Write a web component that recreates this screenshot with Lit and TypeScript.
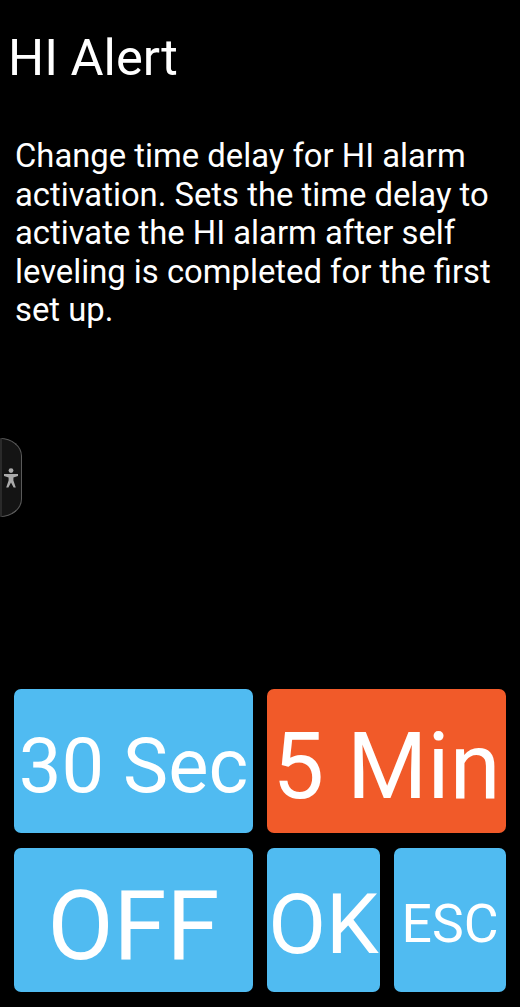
import { LitElement, html, css } from "lit";
import { customElement } from "lit/decorators.js";

@customElement("app-root")
export class AppRoot extends LitElement {
  static styles = css`
    :host { display: block; width: 520px; height: 1007px; background: #000; color: #fff; font-family: Roboto, sans-serif; overflow: hidden; position: relative; }
    .page { height: 1007px; display: flex; flex-direction: column; box-sizing: border-box; }
    h1 { margin: 0; padding: 30px 0 0 8px; font-size: 50.7px; font-weight: 400; line-height: 56px; }
    p { margin: 0; padding: 51px 15px 0 15px; font-size: 32.8px; line-height: 38.5px; flex: 1; }
    .grid { display: grid; grid-template-columns: 239px 113px 112px; grid-template-rows: 144px 144px; gap: 15px 14px; padding: 0 14px 15px 14px; }
    .btn { background: #50bbf1; border-radius: 7px; display: flex; align-items: center; justify-content: center; white-space: nowrap; overflow: hidden; box-sizing: border-box; }
    .wide { grid-column: span 2; }
    .active { background: #f15a29; }
    .a { font-size: 76px; padding-top: 9px; }
    .b { font-size: 92px; padding-top: 10px; }
    .o { font-size: 96px; padding-top: 12px; }
    .c { font-size: 84px; padding-top: 8px; }
    .d { font-size: 53.5px; padding-top: 7px; }
    .tab { position: absolute; left: 0; top: 438px; width: 22px; height: 79px; box-sizing: border-box; border: 1px solid #5a5a5a; border-left: 2px solid #2a2a2a; border-radius: 0 22px 22px 0 / 0 18px 18px 0; background: #141414; display: flex; align-items: center; justify-content: center; }
    svg { width: 18px; height: 22px; flex: none; margin-left: -1px; }
  `;
  render() {
    return html`<div class="page">
      <h1>HI Alert</h1>
      <p>Change time delay for HI alarm activation. Sets the time delay to activate the HI alarm after self leveling is completed for the first set up.</p>
      <div class="grid">
        <div class="btn a">30 Sec</div>
        <div class="btn active wide b">5 Min</div>
        <div class="btn o">OFF</div>
        <div class="btn c">OK</div>
        <div class="btn d">ESC</div>
      </div>
    </div>
    <div class="tab"><svg viewBox="0 0 18 22"><circle cx="9" cy="3.6" r="2.4" fill="#aaa"/><path d="M2 7h14v2l-4.6 1.4v3.2l2.4 7h-2.2L9 15.6l-2.6 5H4.200l2.400-7v-3.200L2 9z" fill="#aaa"/></svg></div>`;
  }
}
